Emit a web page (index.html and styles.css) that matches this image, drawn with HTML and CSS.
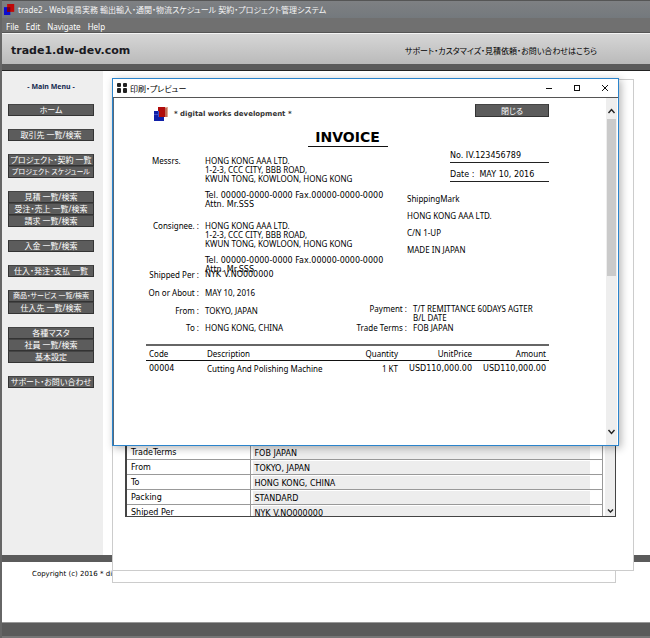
FILE: index.html
```html
<!DOCTYPE html>
<html lang="ja">
<head>
    <meta charset="utf-8" />
    <title>trade2</title>
    <link rel="stylesheet" href="styles.css">
</head>
<body>
    <header>
        <div class="titlebar">
            <svg class="app-icon" width="11" height="11" viewBox="0 0 14 14">
                <rect x="0" y="4" width="8" height="10" fill="#0b0bd0"/>
                <rect x="4" y="0" width="9" height="10" fill="#c00808"/>
                <path d="M4 4h4v6H4z" fill="#700020"/>
            </svg>
            <span>trade2 - Web貿易実務 輸出輸入・通関・物流スケジュール 契約・プロジェクト管理システム</span>
        </div>
        <nav class="menubar">
            <a href="#">File</a>
            <a href="#">Edit</a>
            <a href="#">Navigate</a>
            <a href="#">Help</a>
        </nav>
        <div class="banner">
            <h1>trade1.dw-dev.com</h1>
            <a href="#">サポート・カスタマイズ・見積依頼・お問い合わせはこちら</a>
        </div>
    </header>

    <main>
        <nav class="sidebar">
            <h2>- Main Menu -</h2>
            <div class="group"><button>ホーム</button></div>
            <div class="group"><button>取引先 一覧/検索</button></div>
            <div class="group">
                <button>プロジェクト・契約 一覧</button>
                <button class="long">プロジェクト スケジュール</button>
            </div>
            <div class="group">
                <button>見積 一覧/検索</button>
                <button>受注・売上 一覧/検索</button>
                <button>請求 一覧/検索</button>
            </div>
            <div class="group"><button>入金 一覧/検索</button></div>
            <div class="group"><button>仕入・発注・支払 一覧</button></div>
            <div class="group">
                <button class="long">商品・サービス 一覧/検索</button>
                <button>仕入先 一覧/検索</button>
            </div>
            <div class="group">
                <button>各種マスタ</button>
                <button>社員 一覧/検索</button>
                <button>基本設定</button>
            </div>
            <div class="group"><button>サポート・お問い合わせ</button></div>
        </nav>

        <div class="sheet sheet-back"></div>
        <div class="sheet">
            <div class="details">
                <table>
                    <tr><th>TradeTerms</th><td><div>FOB JAPAN</div></td></tr>
                    <tr><th>From</th><td><div>TOKYO, JAPAN</div></td></tr>
                    <tr><th>To</th><td><div>HONG KONG, CHINA</div></td></tr>
                    <tr><th>Packing</th><td><div>STANDARD</div></td></tr>
                    <tr><th>Shiped Per</th><td><div>NYK V.NO000000</div></td></tr>
                </table>
                <div class="scrollbar">
                    <svg width="7" height="6" viewBox="0 0 7 6"><path d="M1 1.5l2.5 2.5L6 1.5" fill="none" stroke="#222" stroke-width="1.4"/></svg>
                </div>
            </div>
        </div>

        <section class="preview">
            <div class="preview-title">
                <svg width="10" height="10" viewBox="0 0 10 10" fill="#222">
                    <rect width="4" height="4" rx="1"/>
                    <rect x="6" width="4" height="4" rx="1"/>
                    <rect y="5" width="4" height="5" rx="1"/>
                    <rect x="6" y="5" width="4" height="5" rx="1"/>
                </svg>
                <span>印刷・プレビュー</span>
                <div class="controls">
                    <button aria-label="Minimize"><svg width="8" height="8"><path d="M1 4.5h6" stroke="#111"/></svg></button>
                    <button aria-label="Maximize"><svg width="8" height="8"><rect x="1.5" y="1.5" width="5" height="5" fill="none" stroke="#111"/></svg></button>
                    <button aria-label="Close"><svg width="8" height="8"><path d="M1 1l6 6M7 1l-6 6" stroke="#111"/></svg></button>
                </div>
            </div>

            <div class="preview-body">
                <article class="invoice">
                    <div class="company">
                        <svg width="14" height="14" viewBox="0 0 14 14">
                            <rect x="0" y="4" width="10" height="10" fill="#1020a8"/>
                            <rect x="10" y="0" width="4" height="10" fill="#e0a890"/>
                            <path d="M12 1v9" stroke="#a03020"/>
                            <rect x="4" y="0" width="7" height="10" fill="#b00c0c"/>
                            <path d="M4.500 4v6M0 7.500h4" stroke="#4050c8"/>
                        </svg>
                        <strong>* digital works development *</strong>
                        <button class="close">閉じる</button>
                    </div>

                    <h2>INVOICE</h2>

                    <div class="info">
                        <dl class="parties">
                            <dt class="messrs">Messrs.</dt>
                            <dd class="address">
                                <p>HONG KONG AAA LTD.<br>1-2-3, CCC CITY, BBB ROAD,<br>KWUN TONG, KOWLOON, HONG KONG</p>
                                <p class="num">Tel. 00000-0000-0000 Fax.00000-0000-0000<br>Attn. Mr.SSS</p>
                            </dd>
                            <dt>Consignee. :</dt>
                            <dd class="address">
                                <p>HONG KONG AAA LTD.<br>1-2-3, CCC CITY, BBB ROAD,<br>KWUN TONG, KOWLOON, HONG KONG</p>
                                <p class="num">Tel. 00000-0000-0000 Fax.00000-0000-0000<br>Attn. Mr.SSS</p>
                            </dd>
                            <dt>Shipped Per :</dt><dd class="num">NYK V.NO000000</dd>
                            <dt>On or About :</dt><dd>MAY 10, 2016</dd>
                            <dt>From :</dt><dd>TOKYO, JAPAN</dd>
                            <dt>To :</dt><dd>HONG KONG, CHINA</dd>
                        </dl>

                        <div class="shipping">
                            <p class="ref num">No. IV.123456789</p>
                            <p class="ref num">Date :&nbsp; MAY 10, 2016</p>
                            <div class="mark">
                                <p>ShippingMark</p>
                                <p>HONG KONG AAA LTD.</p>
                                <p>C/N 1-UP</p>
                                <p>MADE IN JAPAN</p>
                            </div>
                            <dl class="terms">
                                <dt>Payment :</dt><dd>T/T REMITTANCE 60DAYS AGTER<br>B/L DATE</dd>
                                <dt>Trade Terms :</dt><dd>FOB JAPAN</dd>
                            </dl>
                        </div>
                    </div>

                    <table class="items">
                        <thead>
                            <tr><th class="code">Code</th><th>Description</th><th class="qty">Quantity</th><th class="money">UnitPrice</th><th class="money">Amount</th></tr>
                        </thead>
                        <tbody>
                            <tr><td class="num">00004</td><td>Cutting And Polishing Machine</td><td class="qty">1 KT</td><td class="money num">USD110,000.00</td><td class="money num">USD110,000.00</td></tr>
                        </tbody>
                    </table>
                </article>
                <div class="scrollbar">
                    <svg width="9" height="8" viewBox="0 0 9 8"><path d="M1.500 6l3-3.500L7.500 6" fill="none" stroke="#222" stroke-width="1.400"/></svg>
                    <div class="thumb"></div>
                    <svg width="9" height="8" viewBox="0 0 9 8"><path d="M1.500 2l3 3.500L7.500 2" fill="none" stroke="#222" stroke-width="1.400"/></svg>
                </div>
            </div>
        </section>
    </main>

    <footer>Copyright (c) 2016 * digital works development *</footer>
    <div class="statusbar"></div>
</body>
</html>
```

FILE: styles.css
```css
* {
    box-sizing: border-box;
}

html, body {
    margin: 0;
    padding: 0;
}

body {
    display: flex;
    flex-direction: column;
    min-height: 100vh;
    border-left: 2px solid #666;
    background: #fff;
    color: #000;
    font: 8px/9px "Noto Sans", "Noto Sans CJK JP", sans-serif;
    font-feature-settings: "palt";
}

h1, h2, p, dl, dd {
    margin: 0;
}

a {
    color: inherit;
    text-decoration: none;
}

svg {
    display: block;
}

button {
    padding: 0;
    border: 0;
    background: none;
    font: inherit;
    font-feature-settings: inherit;
}

.num {
    font-family: "DejaVu Sans", sans-serif;
}

/* top of the page */

.titlebar {
    display: flex;
    align-items: center;
    gap: 3px;
    height: 18px;
    padding-left: 2px;
    border-top: 1px solid #555;
    background: linear-gradient(#7e8083, #74797d);
    color: #f4f4f4;
    white-space: nowrap;
}

.menubar {
    display: flex;
    gap: 7px;
    height: 15px;
    padding: 4px 4px 0;
    border-bottom: 1px solid #555;
    background: #707070;
    color: #fff;
}

.banner {
    display: flex;
    align-items: center;
    justify-content: space-between;
    height: 37px;
    padding: 3px 53px 0 9px;
    border-top: 1px solid #f4f4f4;
    border-bottom: 6px solid #5b5b5b;
    background: linear-gradient(#d6d6d6, #bababa);
}

.banner h1 {
    font: bold 11px/14px "DejaVu Sans", sans-serif;
    color: #1a1a22;
}

/* menu */

main {
    position: relative;
    border-top: 1px solid #222;
    border-bottom: 7px solid #5b5b5b;
}

.sidebar {
    width: 101px;
    padding: 11px 9px 167px 6px;
    background: #eee;
}

.sidebar h2 {
    margin-bottom: 13px;
    font-size: 7px;
    line-height: 9px;
    text-align: center;
    color: #12284f;
}

.group {
    margin-bottom: 13px;
}

.group:last-child {
    margin-bottom: 0;
}

.group button, .close {
    display: block;
    width: 100%;
    height: 12px;
    border: 1px solid #333;
    border-top-color: #444;
    background: #5c5c5c;
    color: #fff;
    line-height: 10px;
    white-space: nowrap;
}

.group .long {
    font-size: 7px;
}

/* sheets under the preview window */

.sheet {
    position: absolute;
    top: 8px;
    left: 110px;
    right: 16px;
    height: 492px;
    padding: 363px 17px 0 12px;
    border: 1px solid #ccc;
    background: #fff;
}

.sheet-back {
    right: 34px;
    height: 504px;
}

.details {
    display: flex;
    height: 74px;
    overflow: hidden;
    border: 1px solid #444;
    border-left-width: 2px;
    font-family: "DejaVu Sans", sans-serif;
}

.details table {
    flex: 1;
    border-collapse: collapse;
}

.details th, .details td {
    height: 15px;
    padding: 0;
    border: 1px solid #999;
    border-left: 0;
    text-align: left;
    font-weight: normal;
}

.details th {
    width: 123px;
    padding-left: 4px;
}

.details td {
    padding: 1px 12px 0 2px;
}

.details td div {
    height: 13px;
    padding: 3px 0 0 2px;
    background: #ededed;
}

.details .scrollbar {
    justify-content: flex-end;
    width: 12px;
    padding: 0 0 2px;
    border-left: 2px solid #fff;
}

/* preview window */

.preview {
    position: absolute;
    top: 7px;
    left: 110px;
    right: 31px;
    border: 1px solid #2b84cc;
    background: #fff;
    box-shadow: 2px 2px 8px rgba(0, 0, 0, 0.3);
}

.preview-title {
    display: flex;
    align-items: center;
    gap: 3px;
    height: 19px;
    padding: 0 9px 0 4px;
    border-bottom: 1px solid #555;
}

.controls {
    display: flex;
    gap: 20px;
    margin-left: auto;
}

.preview-body {
    display: flex;
    border-left: 1px solid #56697a;
    padding-right: 1px;
}

.scrollbar {
    display: flex;
    flex-direction: column;
    align-items: center;
    width: 11px;
    padding: 9px 0;
    background: #eee;
}

.thumb {
    width: 9px;
    height: 157px;
    margin: 4px 0 auto;
    background: #cacaca;
}

.invoice {
    flex: 1;
    min-width: 0;
    padding: 6px 57px 70px 32px;
}

.company {
    display: flex;
    align-items: center;
    gap: 6px;
    padding-left: 8px;
    color: #333;
}

.company svg {
    margin-top: 3px;
}

.company strong {
    margin-top: 3px;
    font: bold 7px/9px "DejaVu Sans", sans-serif;
}

.company .close {
    width: 74px;
    height: 13px;
    margin: 0 0 4px auto;
}

.invoice h2 {
    width: 80px;
    margin: 7px auto 3px;
    border-bottom: 1px solid #111;
    font: bold 14px/18px "DejaVu Sans", sans-serif;
    text-align: center;
}

.info {
    display: grid;
    grid-template-columns: minmax(0, 1fr) 196px;
}

.parties {
    display: grid;
    grid-template-columns: 53px 1fr;
    grid-template-rows: 65px 49px 18px 18px 17px 17px;
    column-gap: 6px;
    padding-top: 6px;
}

dt {
    text-align: right;
    white-space: nowrap;
}

.parties dd {
    white-space: nowrap;
}

.parties .messrs {
    padding-left: 6px;
    text-align: left;
}

.address p + p {
    margin-top: 8px;
}

.ref {
    width: 99px;
    height: 12px;
    margin: 1px 0 7px auto;
    border-bottom: 1px solid #222;
}

.mark {
    display: grid;
    gap: 8px;
    padding: 5px 0 50px 54px;
}

.terms {
    display: grid;
    grid-template-columns: 54px 1fr;
    gap: 1px 6px;
}

.items {
    width: 100%;
    margin-top: 4px;
    border-collapse: collapse;
}

.items th, .items td {
    padding: 3px 3px 2px;
    text-align: left;
    font-weight: normal;
}

.items th {
    border-top: 2px solid #666;
    border-bottom: 1px solid #111;
}

.items .code {
    width: 58px;
}

.items .qty {
    width: 60px;
    text-align: right;
}

.items .money {
    width: 74px;
    text-align: right;
}

/* bottom of the page */

footer {
    flex: 1;
    padding: 8px 30px;
    font: 7px/9px "DejaVu Sans", sans-serif;
}

.statusbar {
    height: 16px;
    border-top: 1px solid #999;
    border-bottom: 2px solid #777;
    background: #5b5b5b;
}
```
